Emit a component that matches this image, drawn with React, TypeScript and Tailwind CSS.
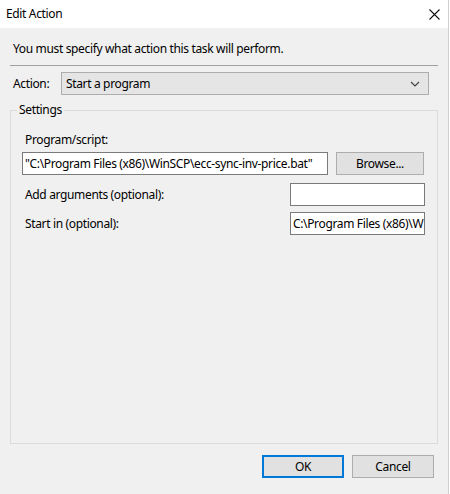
function Chevron() {
  return (
    <svg width="10" height="6" viewBox="0 0 10 6" fill="none">
      <path d="M1 1L5 5L9 1" stroke="#444" strokeWidth="1.2" />
    </svg>
  )
}

function CloseIcon() {
  return (
    <svg width="11" height="11" viewBox="0 0 11 11" fill="none">
      <path d="M0.5 0.5L10.5 10.5M10.5 0.5L0.5 10.5" stroke="#111" strokeWidth="1.1" />
    </svg>
  )
}

export default function App() {
  return (
    <div
      className="w-[449px] h-[494px] bg-[#f0f0f0] border-r border-[#cfcfcf] flex flex-col text-[12px] tracking-[-0.35px] text-black"
      style={{ fontFamily: '"Noto Sans", "Open Sans", sans-serif' }}
    >
      {/* title bar */}
      <div className="h-[28px] bg-white flex items-center justify-between pl-[6px] pr-[8px]">
        <span className="text-[12px]">Edit Action</span>
        <CloseIcon />
      </div>

      <div className="px-[10px] pt-[13px]">
        <p className="pl-[3px] leading-[16px]">You must specify what action this task will perform.</p>
        <div className="mt-[8px] h-px bg-[#a0a0a0]" />

        <div className="mt-[6px] flex items-center">
          <span className="w-[51px] pl-[3px]">Action:</span>
          <div className="w-[368px] h-[23px] bg-[#e5e5e5] border border-[#adadad] flex items-center justify-between pl-[4px] pr-[8px]">
            <span>Start a program</span>
            <Chevron />
          </div>
        </div>

        <fieldset className="mt-[8px] h-[341px] border border-[#dcdcdc] px-[11px]">
          <legend className="-ml-[5px] px-[2px] leading-[14px]">Settings</legend>

          <div className="mt-[15px] pl-[3px] leading-[16px]">Program/script:</div>
          <div className="mt-[4px] flex items-center">
            <div className="w-[306px] h-[23px] bg-white border border-[#7a7a7a] flex items-center pl-[2px] overflow-hidden whitespace-nowrap">
              "C:\Program Files (x86)\WinSCP\ecc-sync-inv-price.bat"
            </div>
            <button className="ml-[8px] w-[88px] h-[23px] bg-[#e1e1e1] border border-[#adadad]">
              Browse...
            </button>
          </div>

          <div className="mt-[8px] flex items-center justify-between w-[403px]">
            <span className="pl-[3px]">Add arguments (optional):</span>
            <div className="w-[135px] h-[23px] bg-white border border-[#7a7a7a]" />
          </div>

          <div className="mt-[6px] flex items-center justify-between w-[403px]">
            <span className="pl-[3px]">Start in (optional):</span>
            <div className="w-[135px] h-[23px] bg-white border border-[#7a7a7a] flex items-center pl-[2px] overflow-hidden whitespace-nowrap">
              C:\Program Files (x86)\W
            </div>
          </div>
        </fieldset>
      </div>

      <div className="mt-[11px] flex justify-end gap-[8px] pr-[14px]">
        <button className="w-[82px] h-[23px] bg-[#e1e1e1] border-2 border-[#0078d7]">OK</button>
        <button className="w-[82px] h-[23px] bg-[#e1e1e1] border border-[#adadad]">Cancel</button>
      </div>
    </div>
  )
}
